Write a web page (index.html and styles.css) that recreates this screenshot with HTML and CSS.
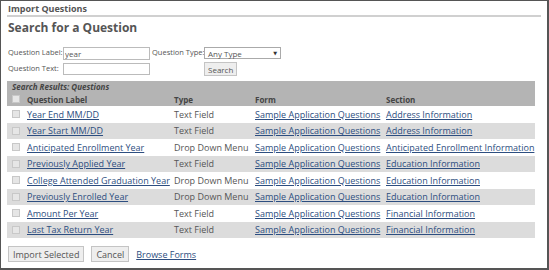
FILE: index.html
```html
<!DOCTYPE html>
<html lang="en">

<head>
    <meta charset="UTF-8">
    <meta name="viewport" content="width=device-width, initial-scale=1.0">
    <title>Import Questions</title>
    <link rel="stylesheet" href="styles.css">
</head>

<body>
    <div class="frame">
        <h2 class="dialogTitle">Import Questions</h2>
        <h1 class="pageTitle">Search for a Question</h1>

        <form class="searchForm">
            <div class="fieldCol">
                <div class="fieldRow">
                    <label class="fieldLabel">Question Label:</label>
                    <input class="textInput" type="text" value="year">
                </div>
                <div class="fieldRow">
                    <label class="fieldLabel">Question Text:</label>
                    <input class="textInput" type="text">
                </div>
            </div>
            <div class="fieldCol">
                <div class="fieldRow">
                    <label class="fieldLabel">Question Type:</label>
                    <div class="selectBox">
                        <span>Any Type</span>
                        <span class="caret">&#9660;</span>
                    </div>
                </div>
                <div class="fieldRow">
                    <span class="fieldLabel"></span>
                    <button class="btn searchBtn" type="button">Search</button>
                </div>
            </div>
        </form>

        <table class="results">
            <colgroup>
                <col class="colCheck">
                <col class="colLabel">
                <col class="colType">
                <col class="colForm">
                <col class="colSection">
            </colgroup>
            <thead>
                <tr class="captionRow">
                    <th colspan="5">Search Results: Questions</th>
                </tr>
                <tr class="headRow">
                    <th><span class="check"></span></th>
                    <th>Question Label</th>
                    <th>Type</th>
                    <th>Form</th>
                    <th>Section</th>
                </tr>
            </thead>
            <tbody>
                <tr>
                    <td><span class="check"></span></td>
                    <td><a href="#">Year End MM/DD</a></td>
                    <td>Text Field</td>
                    <td><a href="#">Sample Application Questions</a></td>
                    <td><a href="#">Address Information</a></td>
                </tr>
                <tr>
                    <td><span class="check"></span></td>
                    <td><a href="#">Year Start MM/DD</a></td>
                    <td>Text Field</td>
                    <td><a href="#">Sample Application Questions</a></td>
                    <td><a href="#">Address Information</a></td>
                </tr>
                <tr>
                    <td><span class="check"></span></td>
                    <td><a href="#">Anticipated Enrollment Year</a></td>
                    <td>Drop Down Menu</td>
                    <td><a href="#">Sample Application Questions</a></td>
                    <td><a href="#">Anticipated Enrollment Information</a></td>
                </tr>
                <tr>
                    <td><span class="check"></span></td>
                    <td><a href="#">Previously Applied Year</a></td>
                    <td>Text Field</td>
                    <td><a href="#">Sample Application Questions</a></td>
                    <td><a href="#">Education Information</a></td>
                </tr>
                <tr>
                    <td><span class="check"></span></td>
                    <td><a href="#">College Attended Graduation Year</a></td>
                    <td>Drop Down Menu</td>
                    <td><a href="#">Sample Application Questions</a></td>
                    <td><a href="#">Education Information</a></td>
                </tr>
                <tr>
                    <td><span class="check"></span></td>
                    <td><a href="#">Previously Enrolled Year</a></td>
                    <td>Drop Down Menu</td>
                    <td><a href="#">Sample Application Questions</a></td>
                    <td><a href="#">Education Information</a></td>
                </tr>
                <tr>
                    <td><span class="check"></span></td>
                    <td><a href="#">Amount Per Year</a></td>
                    <td>Text Field</td>
                    <td><a href="#">Sample Application Questions</a></td>
                    <td><a href="#">Financial Information</a></td>
                </tr>
                <tr>
                    <td><span class="check"></span></td>
                    <td><a href="#">Last Tax Return Year</a></td>
                    <td>Text Field</td>
                    <td><a href="#">Sample Application Questions</a></td>
                    <td><a href="#">Financial Information</a></td>
                </tr>
            </tbody>
        </table>

        <div class="actions">
            <button class="btn" type="button">Import Selected</button>
            <button class="btn" type="button">Cancel</button>
            <a href="#" class="browseLink">Browse Forms</a>
        </div>
    </div>
</body>

</html>
```

FILE: styles.css
```css
* {
    margin: 0;
    padding: 0;
    box-sizing: border-box;
}

body {
    background-color: #fff;
    font-family: "Open Sans", "DejaVu Sans", sans-serif;
    color: #555;
}

.frame {
    width: 549px;
    height: 270px;
    border: 1px solid #555;
    border-right-width: 2px;
    border-bottom-width: 2px;
    padding: 0 6px 0 6px;
}

.dialogTitle {
    font-size: 9px;
    font-weight: 700;
    color: #555;
    line-height: 13px;
    padding: 1px 0 0 1px;
    border-bottom: 2px solid #d0d0d0;
}

.pageTitle {
    font-size: 12px;
    font-weight: 700;
    color: #555;
    line-height: 16px;
    margin-top: 3px;
    padding-left: 1px;
}

/* search form */
.searchForm {
    display: flex;
    margin-top: 11px;
    font-size: 7.5px;
}

.fieldCol {
    display: flex;
    flex-direction: column;
    gap: 3px;
}

.fieldRow {
    display: flex;
    align-items: flex-start;
}

.fieldLabel {
    display: block;
    flex: 0 0 56px;
    width: 56px;
    line-height: 11px;
    padding-left: 1px;
    white-space: nowrap;
}

.fieldCol:nth-child(2) .fieldLabel {
    flex-basis: 54px;
    width: 54px;
    padding-left: 2px;
}

.textInput {
    width: 87px;
    height: 13px;
    border: 1px solid #bbb;
    font-family: inherit;
    font-size: 8px;
    color: #555;
    padding: 0 1px;
}

.fieldRow + .fieldRow .textInput {
    height: 12px;
}

.selectBox {
    width: 77px;
    height: 12px;
    border: 1px solid #aaa;
    display: flex;
    justify-content: space-between;
    align-items: center;
    padding: 0 3px;
    font-size: 8px;
}

.caret {
    font-size: 5px;
    color: #333;
}

.btn {
    font-family: inherit;
    font-size: 9px;
    color: #555;
    background-color: #eee;
    border: 1px solid #c4c4c4;
    padding: 0 4px;
    height: 16px;
    cursor: pointer;
}

.searchBtn {
    font-size: 8px;
    height: 14px;
    padding: 0 3px;
}

/* results table */
.results {
    width: 528px;
    margin-top: 5px;
    border-collapse: collapse;
    table-layout: fixed;
    font-size: 9px;
}

.colCheck {
    width: 17px;
}

.colLabel {
    width: 147px;
}

.colType {
    width: 81px;
}

.colForm {
    width: 131px;
}

.colSection {
    width: 152px;
}

.results thead tr {
    background-color: #b4b4b4;
}

.captionRow th {
    font-style: italic;
    font-weight: 700;
    font-size: 8px;
    color: #444;
    text-align: left;
    height: 11px;
    line-height: 11px;
    padding: 0 5px;
}

.headRow th {
    font-weight: 700;
    font-size: 8px;
    color: #444;
    text-align: left;
    height: 14px;
    padding: 0 3px;
    white-space: nowrap;
}

.results td {
    height: 16.5px;
    padding: 0 3px;
    white-space: nowrap;
    overflow: visible;
}

.results tbody tr:nth-child(even) {
    background-color: #dcdcdc;
}

.results a {
    color: #2d4e80;
}

.check {
    display: block;
    width: 8px;
    height: 8px;
    margin-left: 2px;
    border: 1px solid #c8c8c8;
    background-color: #e6e6e6;
}

/* bottom actions */
.actions {
    display: flex;
    align-items: center;
    gap: 7px;
    margin-top: 8px;
    padding-left: 1px;
}

.browseLink {
    font-size: 9px;
    color: #2d4e80;
}
```
